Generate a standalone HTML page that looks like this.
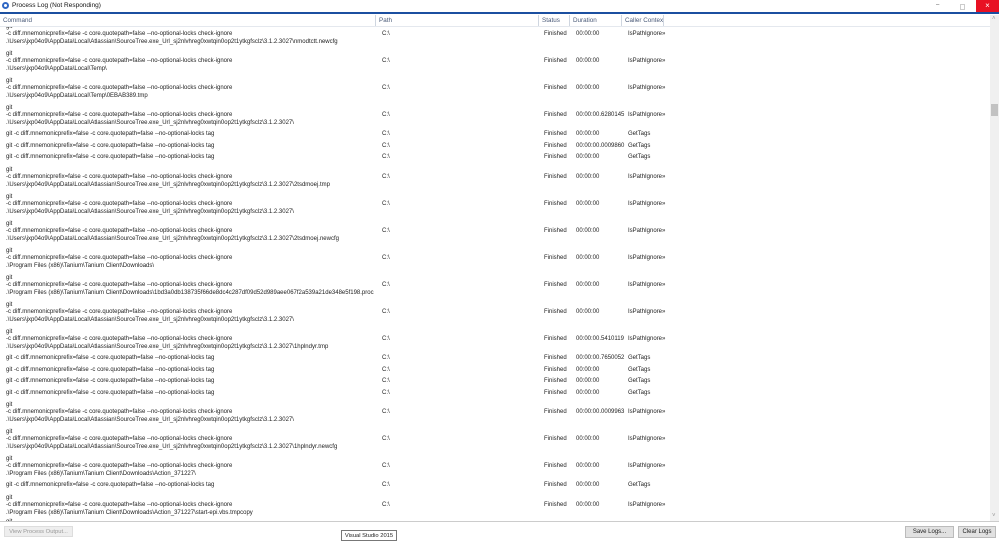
<!DOCTYPE html>
<html><head><meta charset="utf-8"><style>
body{margin:0;width:999px;height:541px;background:#fff;position:relative;overflow:hidden;font-family:"Liberation Sans",sans-serif;color:#222}
.t{position:absolute;font-size:6px;line-height:8px;white-space:nowrap}
.h{position:absolute;top:15px;height:11px;border-right:1px solid #cfd6e0;font-size:6.3px;line-height:11px;color:#4a5a78;padding-left:3px;box-sizing:border-box;background:#fff;white-space:nowrap;overflow:hidden;z-index:5}
</style></head><body>
<div style="position:absolute;left:0;top:0;width:999px;height:12px;background:#fff;z-index:5"></div>
<div style="position:absolute;left:2px;top:2px;width:7px;height:7px;border-radius:50%;background:#2f67c4;z-index:6"></div>
<div style="position:absolute;left:4px;top:4px;width:3px;height:3px;border-radius:50%;background:#fff;z-index:6"></div>
<div class="t" style="left:12px;top:2px;font-size:6.5px;color:#111;z-index:6">Process Log (Not Responding)</div>
<div class="t" style="left:936px;top:1px;color:#555;z-index:6">–</div>
<div style="position:absolute;left:960px;top:4px;width:3px;height:4px;border:1px solid #ccc;z-index:6"></div>
<div style="position:absolute;left:976px;top:0;width:23px;height:12px;background:#e81123;color:#fff;font-size:8px;text-align:center;line-height:12px;z-index:6">×</div>
<div style="position:absolute;left:0;top:12px;width:999px;height:2px;background:#1b4fa0;z-index:6"></div>
<div style="position:absolute;left:0;top:14px;width:999px;height:1px;background:#fff;z-index:6"></div>
<div class="h" style="left:0;width:376px">Command</div>
<div class="h" style="left:376px;width:163px">Path</div>
<div class="h" style="left:539px;width:31px">Status</div>
<div class="h" style="left:570px;width:52px">Duration</div>
<div class="h" style="left:622px;width:42px">Caller Contex</div>
<div class="h" style="left:664px;width:326px;border-right:none"></div>
<div style="position:absolute;left:0;top:26px;width:990px;height:1px;background:#e4e8ee;z-index:6"></div>
<div style="position:absolute;left:990px;top:15px;width:9px;height:506px;background:#f0f0f0;z-index:6"></div>
<div style="position:absolute;left:991px;top:104px;width:7px;height:12px;background:#c2c2c2;z-index:6"></div>
<div class="t" style="left:992px;top:15px;color:#999;z-index:6">˄</div>
<div class="t" style="left:992px;top:512px;color:#999;z-index:6">˅</div>
<div id="rows"></div>
<div style="position:absolute;left:0;top:521px;width:999px;height:20px;background:#fff;border-top:1px solid #ccc;z-index:6"></div>
<div style="position:absolute;left:4px;top:526px;width:69px;height:11px;background:#eee;border:1px solid #ddd;box-sizing:border-box;font-size:5.8px;line-height:10px;color:#999;text-align:center;z-index:7">View Process Output...</div>
<div style="position:absolute;left:905px;top:526px;width:49px;height:12px;background:#e1e1e1;border:1px solid #bbb;box-sizing:border-box;font-size:6px;line-height:11px;text-align:center;z-index:7">Save Logs...</div>
<div style="position:absolute;left:958px;top:526px;width:38px;height:12px;background:#e1e1e1;border:1px solid #bbb;box-sizing:border-box;font-size:6px;line-height:11px;text-align:center;z-index:7">Clear Logs</div>
<div style="position:absolute;left:341px;top:530px;width:56px;height:11px;background:#fff;border:1px solid #777;box-sizing:border-box;font-size:5.8px;line-height:10px;text-align:center;z-index:7">Visual Studio 2015</div>
<script>
var C="-c diff.mnemonicprefix=false -c core.quotepath=false --no-optional-locks check-ignore";
var T="git -c diff.mnemonicprefix=false -c core.quotepath=false --no-optional-locks tag";
var S=".\\Users\\jxp04o9\\AppData\\Local\\Atlassian\\SourceTree.exe_Url_sj2nlvhreg0xwtqin0op2t1ytkgfsclz\\3.1.2.3027\\";
var D=".\\Program Files (x86)\\Tanium\\Tanium Client\\Downloads\\";
var rows=[
['m',33,S+"nmodtctt.newcfg","00:00:00"],
['m',60,".\\Users\\jxp04o9\\AppData\\Local\\Temp\\","00:00:00"],
['m',87,".\\Users\\jxp04o9\\AppData\\Local\\Temp\\0EBAB389.tmp","00:00:00"],
['m',114,S,"00:00:00.6280145"],
['s',133,"00:00:00"],['s',145,"00:00:00.0009860"],['s',156,"00:00:00"],
['m',176,S+"2tsdmoej.tmp","00:00:00"],
['m',203,S,"00:00:00"],
['m',230,S+"2tsdmoej.newcfg","00:00:00"],
['m',257,D,"00:00:00"],
['m',284,D+"1bd3a0db138735f66de8dc4c287df09d52d989aee067f2a539a21de348e5f198.proc","00:00:00"],
['m',311,S,"00:00:00"],
['m',338,S+"1hplndyr.tmp","00:00:00.5410119"],
['s',357,"00:00:00.7650052"],['s',369,"00:00:00"],['s',380,"00:00:00"],['s',392,"00:00:00"],
['m',411,S,"00:00:00.0009963"],
['m',438,S+"1hplndyr.newcfg","00:00:00"],
['m',465,D+"Action_371227\\","00:00:00"],
['s',484,"00:00:00"],
['m',504,D+"Action_371227\\start-epi.vbs.tmpcopy","00:00:00"]];
var h="";
function t(x,y,s){h+='<div class="t" style="left:'+x+'px;top:'+(y-3)+'px">'+s.replace(/&/g,"&amp;")+'</div>';}
rows.forEach(function(r){
 var y=r[1];
 if(r[0]=='m'){t(6,y-7,"git");t(6,y,C);t(6,y+8,r[2]);t(382,y,"C:\\");t(544,y,"Finished");t(576,y,r[3]);t(628,y,"IsPathIgnore\u00bb");}
 else{t(6,y,T);t(382,y,"C:\\");t(544,y,"Finished");t(576,y,r[2]);t(628,y,"GetTags");}
});
t(6,521,"git");
document.getElementById("rows").innerHTML=h;
</script>
</body></html>
